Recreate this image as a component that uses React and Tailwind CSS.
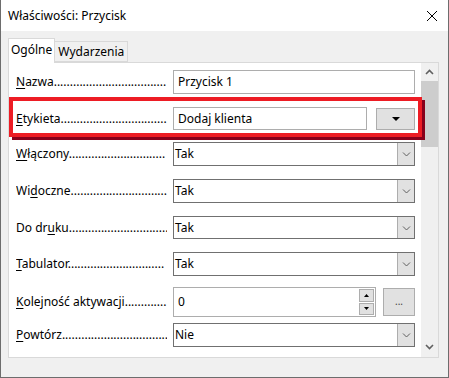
import React from 'react';

function Label({ pre, u, post, dots }) {
  return (
    <div className="flex w-[151px] shrink-0 items-center overflow-hidden whitespace-nowrap">
      <span>
        {pre}
        <span className="underline underline-offset-2">{u}</span>
        {post}
        {'.'.repeat(dots)}
      </span>
    </div>
  );
}

function Chevron() {
  return (
    <svg width="9" height="6" viewBox="0 0 9 6">
      <path d="M1 1.5 L4.5 5 L8 1.5" fill="none" stroke="#606060" strokeWidth="1" />
    </svg>
  );
}

function Select({ value }) {
  return (
    <div className="flex h-full w-[242px] border border-[#707070] bg-white">
      <div className="flex flex-1 items-center pl-[1px]">{value}</div>
      <div className="flex w-[17px] items-center justify-center border-l border-[#adadad] bg-[#e1e1e1]">
        <Chevron />
      </div>
    </div>
  );
}

function Row({ className, children }) {
  return <div className={`flex items-center pl-[7px] ${className}`}>{children}</div>;
}

export default function App() {
  return (
    <div
      className="flex h-[378px] w-[449px] flex-col border-x border-b border-[#6d6d6d] bg-[#f0f0f0] text-[12px] text-black"
      style={{ fontFamily: '"Noto Sans", sans-serif' }}
    >
      <div className="flex h-[31px] shrink-0 items-center justify-between bg-white pl-[7px] pr-[10px]">
        <span>Właściwości: Przycisk</span>
        <svg width="12" height="12" viewBox="0 0 12 12">
          <path d="M1 1 L11 11 M11 1 L1 11" stroke="#000" strokeWidth="1" />
        </svg>
      </div>

      <div className="flex flex-1 flex-col pl-[7px] pt-[7px]">
        <div className="flex h-[24px] items-end">
          <div className="relative z-10 -mb-px flex h-[25px] items-center border border-b-0 border-[#d9d9d9] bg-white px-[2px] pb-[2px]">
            Ogólne
          </div>
          <div className="flex h-[21px] items-center border border-l-0 border-[#d9d9d9] bg-[#f0f0f0] px-[3px]">
            Wydarzenia
          </div>
        </div>

        <div className="relative flex h-[296px] w-[431px] border border-[#d9d9d9] bg-white">
          <div className="flex flex-1 flex-col">
            <Row className="mt-[7px] h-[24px]">
              <Label u="N" post="azwa" dots={35} />
              <div className="ml-[6px] flex h-full w-[242px] items-center border border-[#adadad] pl-[4px]">Przycisk 1</div>
            </Row>
            <Row className="mt-[13px] h-[23px]">
              <Label u="E" post="tykieta" dots={33} />
              <div className="ml-[6px] flex h-full w-[194px] items-center border border-[#adadad] pl-[4px]">Dodaj klienta</div>
              <div className="ml-[9px] flex h-[22px] w-[39px] items-center justify-center border border-[#adadad] bg-[#e1e1e1]">
                <svg width="8" height="4" viewBox="0 0 8 4">
                  <path d="M0 0 L8 0 L4 4 Z" fill="#000" />
                </svg>
              </div>
            </Row>
            <Row className="mt-[12px] h-[24px]">
              <Label u="W" post="łączony" dots={30} />
              <div className="ml-[6px] h-full"><Select value="Tak" /></div>
            </Row>
            <Row className="mt-[13px] h-[24px]">
              <Label pre="Wi" u="d" post="oczne" dots={30} />
              <div className="ml-[6px] h-full"><Select value="Tak" /></div>
            </Row>
            <Row className="mt-[13px] h-[23px]">
              <Label pre="Do dr" u="u" post="ku" dots={31} />
              <div className="ml-[6px] h-full"><Select value="Tak" /></div>
            </Row>
            <Row className="mt-[13px] h-[24px]">
              <Label u="T" post="abulator" dots={30} />
              <div className="ml-[6px] h-full"><Select value="Tak" /></div>
            </Row>
            <Row className="mt-[11px] h-[30px]">
              <Label u="K" post="olejność aktywacji" dots={13} />
              <div className="ml-[6px] flex h-full w-[203px] items-center border border-[#adadad] pl-[4px] pr-[1px]">
                <span className="flex-1">0</span>
                <div className="flex h-[26px] w-[15px] flex-col gap-[1px]">
                  <div className="flex flex-1 items-center justify-center border border-[#adadad] bg-[#e1e1e1]">
                    <svg width="5" height="3" viewBox="0 0 5 3"><path d="M0 3 L5 3 L2.5 0 Z" fill="#000" /></svg>
                  </div>
                  <div className="flex flex-1 items-center justify-center border border-[#adadad] bg-[#e1e1e1]">
                    <svg width="5" height="3" viewBox="0 0 5 3"><path d="M0 0 L5 0 L2.5 3 Z" fill="#000" /></svg>
                  </div>
                </div>
              </div>
              <div className="ml-[7px] flex h-[28px] w-[32px] items-center justify-center border border-[#adadad] bg-[#e1e1e1] pb-[2px] text-[10px] text-[#444]">
                ...
              </div>
            </Row>
            <Row className="mt-[6px] h-[24px]">
              <Label u="P" post="owtórz" dots={33} />
              <div className="ml-[6px] h-full"><Select value="Nie" /></div>
            </Row>
          </div>

          <div className="flex w-[17px] flex-col bg-[#f0f0f0]">
            <div className="flex h-[18px] items-center justify-center">
              <svg width="9" height="6" viewBox="0 0 9 6">
                <path d="M1 5 L4.5 1.5 L8 5" fill="none" stroke="#606060" strokeWidth="1.6" />
              </svg>
            </div>
            <div className="h-[66px] bg-[#cdcdcd]" />
            <div className="flex-1" />
            <div className="flex h-[18px] items-center justify-center pb-[3px]">
              <svg width="9" height="6" viewBox="0 0 9 6">
                <path d="M1 1 L4.5 4.5 L8 1" fill="none" stroke="#606060" strokeWidth="1.6" />
              </svg>
            </div>
          </div>

          <div className="absolute left-0 top-[34px] h-[40px] w-[413px] border-4 border-[#ed1c24] shadow-[3px_3px_0_#88001b]" />
        </div>
      </div>
    </div>
  );
}
